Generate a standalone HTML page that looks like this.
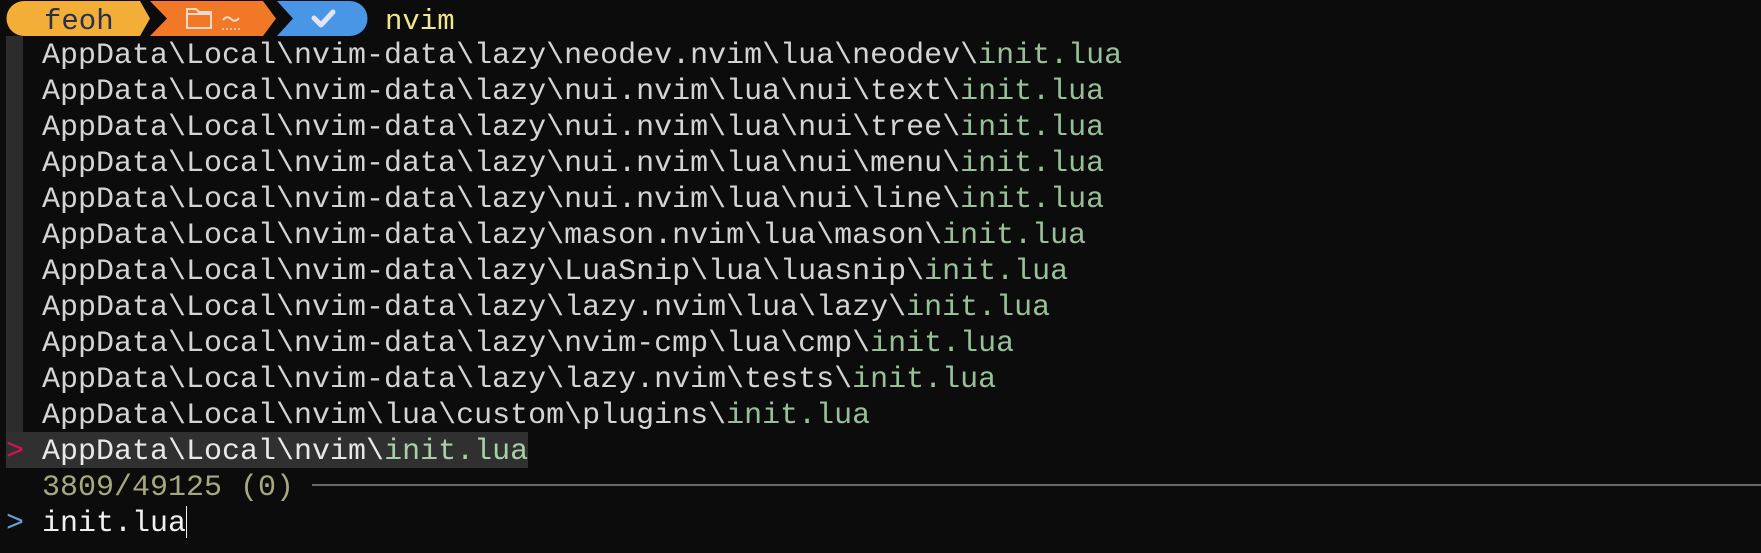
<!DOCTYPE html>
<html><head><meta charset="utf-8"><style>
html,body{margin:0;padding:0;background:#0c0c0c;width:1761px;height:553px;overflow:hidden}
body{position:relative;font-family:"Liberation Mono",monospace;font-size:30px;color:#d4d4d4}
.r{position:absolute;left:42px;height:36px;line-height:40px;white-space:pre}
.g{color:#98c098}
.gut{position:absolute;left:6px;top:36px;width:17px;height:396px;background:#2c2c2c}
.sel{position:absolute;left:6px;top:432px;width:522px;height:36px;background:#303030}
</style></head><body>
<svg style="position:absolute;left:0;top:0" width="480" height="38">
<path d="M24 1 H140 L150 18.5 L140 36 H24 A17.5 17.5 0 0 1 24 1Z" fill="#f2ae36"/>
<path d="M150 1 H263 L276 18.5 L263 36 H150 L167 18.5Z" fill="#f07826"/>
<path d="M277 1 H350 A17.5 17.5 0 0 1 350 36 H277 L293 18.5Z" fill="#4a96e6"/>
<g fill="none" stroke="#f3d9cc" stroke-width="2">
<path d="M187 9 H196 L199 12 H211 V28 H187 Z M187 14 H211"/>
</g>
<path d="M223 20 Q227 15 231 19 Q235 23 239 18" fill="none" stroke="#f3d9cc" stroke-width="2"/>
<path d="M222 29 H240" stroke="#f3d9cc" stroke-width="1.5" stroke-dasharray="2 2"/>
<path d="M314 18 L321 25 L333 12" fill="none" stroke="#e4e4f4" stroke-width="5" stroke-linecap="round" stroke-linejoin="round"/>
<text x="44" y="29" font-family="Liberation Mono,monospace" font-size="29" fill="#263050">feoh</text>
<text x="385" y="29" font-family="Liberation Mono,monospace" font-size="29" fill="#f0e68c">nvim</text>
</svg>
<div class="gut"></div>
<div class="sel"></div>
<div class="r" style="top:36px">AppData\Local\nvim-data\lazy\neodev.nvim\lua\neodev\<span class="g">init.lua</span></div>
<div class="r" style="top:72px">AppData\Local\nvim-data\lazy\nui.nvim\lua\nui\text\<span class="g">init.lua</span></div>
<div class="r" style="top:108px">AppData\Local\nvim-data\lazy\nui.nvim\lua\nui\tree\<span class="g">init.lua</span></div>
<div class="r" style="top:144px">AppData\Local\nvim-data\lazy\nui.nvim\lua\nui\menu\<span class="g">init.lua</span></div>
<div class="r" style="top:180px">AppData\Local\nvim-data\lazy\nui.nvim\lua\nui\line\<span class="g">init.lua</span></div>
<div class="r" style="top:216px">AppData\Local\nvim-data\lazy\mason.nvim\lua\mason\<span class="g">init.lua</span></div>
<div class="r" style="top:252px">AppData\Local\nvim-data\lazy\LuaSnip\lua\luasnip\<span class="g">init.lua</span></div>
<div class="r" style="top:288px">AppData\Local\nvim-data\lazy\lazy.nvim\lua\lazy\<span class="g">init.lua</span></div>
<div class="r" style="top:324px">AppData\Local\nvim-data\lazy\nvim-cmp\lua\cmp\<span class="g">init.lua</span></div>
<div class="r" style="top:360px">AppData\Local\nvim-data\lazy\lazy.nvim\tests\<span class="g">init.lua</span></div>
<div class="r" style="top:396px">AppData\Local\nvim\lua\custom\plugins\<span class="g">init.lua</span></div>
<div class="r" style="top:432px;left:6px;color:#d8105a">&gt;</div>
<div class="r" style="top:432px;color:#e8e8e8">AppData\Local\nvim\<span style="color:#a8d0a8">init.lua</span></div>
<div class="r" style="top:468px;color:#a8a880">3809/49125 (0)</div>
<div style="position:absolute;left:312px;top:484px;width:1449px;height:2px;background:#6a6a6a"></div>
<div class="r" style="top:504px;left:6px;color:#6a9ed6">&gt;</div>
<div class="r" style="top:504px;color:#f0f0f0">init.lua</div>
<div style="position:absolute;left:186px;top:506px;width:1px;height:32px;background:#f0f0f0"></div>
</body></html>
